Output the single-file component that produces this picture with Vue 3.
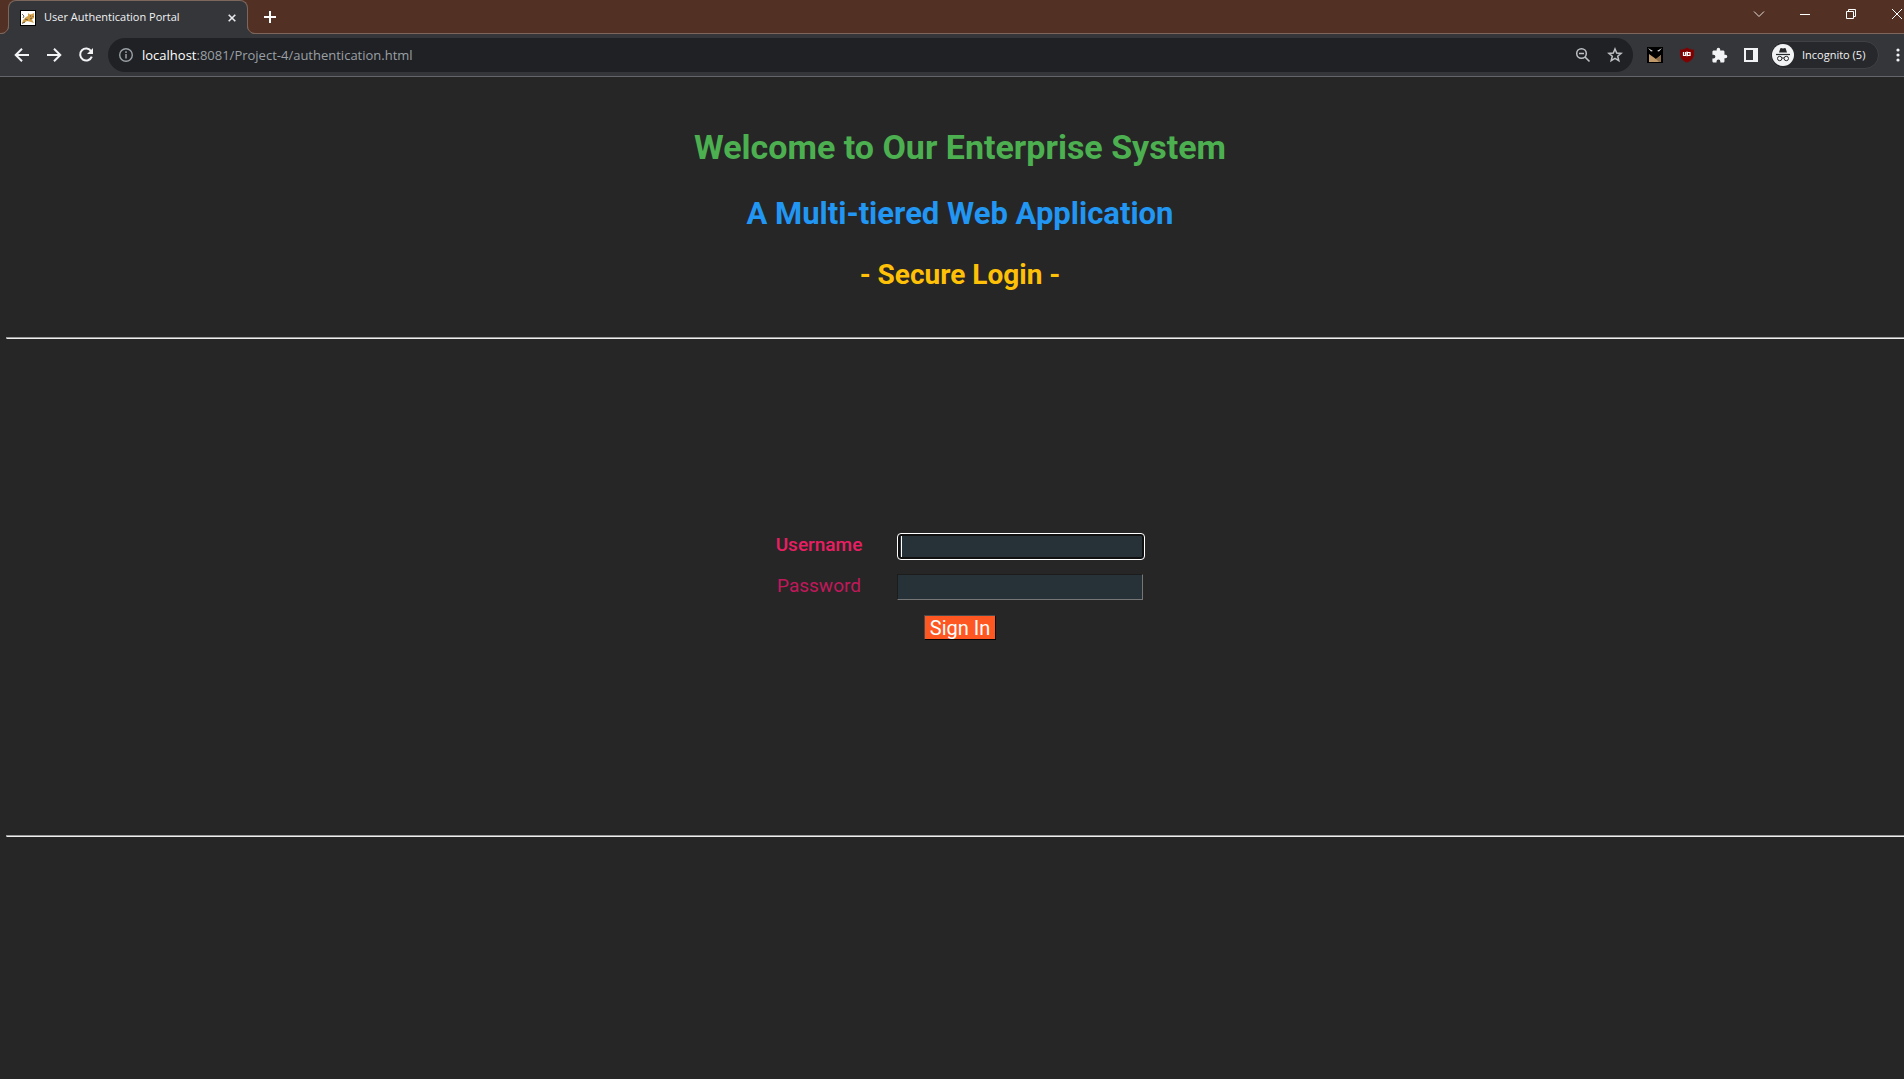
<script setup>
import { ref } from 'vue'

const username = ref('')
const password = ref('')
</script>

<template>
  <div class="screen">
    <div class="window">
      <header class="titlebar">
        <div class="tab">
          <svg class="favicon" width="16" height="16" viewBox="0 0 16 16">
            <rect x="0.5" y="0.5" width="15" height="15" fill="#fff" stroke="#000" />
            <path d="M2 13L3 10L6 7L8 6L8 3L10 4.500L12 4L14 3L14 8L12 9.500L14 13L11 12L7 11L4 13Z" fill="#d2a04a" />
            <path d="M2 4L4 6L3 8M5 9L8 10M2 13.500L5 12M10 6H11M13 6V7M10 9L12 8" fill="none" stroke="#4c4433" stroke-width="0.800" />
          </svg>
          <span class="tab-title">User Authentication Portal</span>
          <button class="tab-close" aria-label="Close tab">
            <svg width="8" height="8" viewBox="0 0 8 8"><path d="M0.7 0.7L7.3 7.3M7.3 0.7L0.7 7.3" stroke="#e8eaed" stroke-width="1.6" /></svg>
          </button>
          <svg class="tab-foot left" width="8" height="8" viewBox="0 0 8 8"><path d="M8 0A8 8 0 0 1 0 8H8Z" fill="#35363a" /><path d="M7.5 0A7.5 7.5 0 0 1 0 7.5" fill="none" stroke="#7d675d" /></svg>
          <svg class="tab-foot right" width="8" height="8" viewBox="0 0 8 8"><path d="M0 0A8 8 0 0 0 8 8H0Z" fill="#35363a" /><path d="M0.5 0A7.5 7.5 0 0 0 8 7.5" fill="none" stroke="#7d675d" /></svg>
        </div>
        <button class="new-tab" aria-label="New tab">
          <svg width="12" height="12" viewBox="0 0 12 12"><path d="M6 0V12M0 6H12" stroke="#fff" stroke-width="2" /></svg>
        </button>
        <div class="controls">
          <button aria-label="Search tabs"><svg width="12" height="12" viewBox="0 0 12 12"><path d="M1 3.5L6 8.5L11 3.5" fill="none" stroke="#e5dfdc" /></svg></button>
          <button aria-label="Minimize"><svg width="10" height="10" viewBox="0 0 10 10"><path d="M0 5.5H10" stroke="#fff" /></svg></button>
          <button aria-label="Restore"><svg width="10" height="10" viewBox="0 0 10 10"><path d="M0.5 2.5H7.5V9.5H0.5ZM2.5 2.5V0.5H9.5V7.5H7.5" fill="none" stroke="#fff" /></svg></button>
          <button aria-label="Close"><svg width="10" height="10" viewBox="0 0 10 10"><path d="M0 0L10 10M10 0L0 10" stroke="#fff" /></svg></button>
        </div>
      </header>

      <nav class="toolbar">
        <button class="tool" aria-label="Back"><svg width="16" height="16" viewBox="0 0 16 16"><path d="M15 8H2M8 1.7L1.7 8L8 14.3" fill="none" stroke="#f1f3f4" stroke-width="2" /></svg></button>
        <button class="tool" aria-label="Forward"><svg width="16" height="16" viewBox="0 0 16 16"><path d="M1 8H14M8 1.7L14.3 8L8 14.3" fill="none" stroke="#f1f3f4" stroke-width="2" /></svg></button>
        <button class="tool" aria-label="Reload"><svg width="16" height="16" viewBox="0 0 16 16"><path d="M13.2 4.2A6 6 0 1 0 13.8 9.6" fill="none" stroke="#f1f3f4" stroke-width="2" /><path d="M15 1V7H9Z" fill="#f1f3f4" /></svg></button>
        <div class="address">
          <svg width="14" height="14" viewBox="0 0 14 14"><circle cx="7" cy="7" r="6.3" fill="none" stroke="#9aa0a6" stroke-width="1.4" /><path d="M7 6V10.5M7 3.3V5" stroke="#9aa0a6" stroke-width="1.5" /></svg>
          <span class="url"><b>localhost</b>:8081/Project-4/authentication.html</span>
          <button class="tool" aria-label="Zoom"><svg width="16" height="16" viewBox="0 0 16 16"><circle cx="6.5" cy="6.5" r="4.8" fill="none" stroke="#bdc1c6" stroke-width="1.5" /><path d="M4 6.5H9M10 10L14.5 14.5" stroke="#bdc1c6" stroke-width="1.6" /></svg></button>
          <button class="tool" aria-label="Bookmark this tab"><svg width="16" height="16" viewBox="0 0 16 16"><path d="M8 2L9.7 6.1L14.1 6.4L10.7 9.3L11.8 13.6L8 11.3L4.2 13.6L5.3 9.3L1.9 6.4L6.3 6.1Z" fill="none" stroke="#bdc1c6" stroke-width="1.5" /></svg></button>
        </div>
        <div class="extensions">
          <button class="tool" aria-label="Dark mode extension"><svg width="16" height="16" viewBox="0 0 16 16"><rect width="16" height="16" fill="#000" /><path d="M2 15V7L9 12L14 8V15Z" fill="#c19a6b" /><path d="M9 12L14 8V15H12Z" fill="#8d6e4a" /><path d="M1 1L6 4L4 4.5ZM15 1L10 4L12 4.5Z" fill="#d8d8d8" /></svg></button>
          <button class="tool" aria-label="uBlock"><svg width="16" height="16" viewBox="0 0 16 16"><path d="M8 0.5C10 2 12 2.500 15 2.500V7C15 11.500 12 14 8 15.500C4 14 1 11.500 1 7V2.500C4 2.500 6 2 8 0.500Z" fill="#800000" stroke="#5d2024" stroke-width="0.5" /><path d="M4.500 5V8.500H6.500V5M8 4.500V9.200M8.500 5.500H11V8.500H8.500Z" fill="none" stroke="#fff" stroke-width="1.200" /></svg></button>
          <button class="tool" aria-label="Extensions"><svg width="17" height="17" viewBox="0 0 24 24"><path d="M20.5 11H19V7c0-1.1-.9-2-2-2h-4V3.500a2.500 2.500 0 0 0-5 0V5H4c-1.100 0-1.990.9-1.990 2v3.800H3.500a2.700 2.700 0 0 1 0 5.400H2V20c0 1.100.9 2 2 2h3.800v-1.500a2.700 2.700 0 0 1 5.400 0V22H17c1.100 0 2-.9 2-2v-4h1.500a2.500 2.500 0 0 0 0-5z" fill="#f1f3f4" /></svg></button>
          <button class="tool" aria-label="Side panel"><svg width="14" height="14" viewBox="0 0 14 14"><path d="M0 0H14V14H0ZM2 2V12H9V2Z" fill="#f1f3f4" fill-rule="evenodd" /></svg></button>
        </div>
        <button class="incognito">
          <svg width="22" height="22" viewBox="0 0 22 22"><circle cx="11" cy="11" r="11" fill="#f1f3f4" /><path d="M7 8.500L8.300 4.500Q8.500 4 9 4.100L11 4.600L13 4.100Q13.500 4 13.700 4.500L15 8.500Z" fill="#27282b" /><path d="M4 10.500H18" stroke="#27282b" stroke-width="1.200" /><circle cx="7.700" cy="14.500" r="2.200" fill="none" stroke="#27282b" /><circle cx="14.300" cy="14.500" r="2.200" fill="none" stroke="#27282b" /><path d="M9.900 14.200Q11 13.500 12.100 14.200" fill="none" stroke="#27282b" /></svg>
          <span>Incognito (5)</span>
        </button>
        <button class="tool" aria-label="Menu"><svg width="4" height="14" viewBox="0 0 4 14"><circle cx="2" cy="2" r="1.600" fill="#f1f3f4" /><circle cx="2" cy="7" r="1.600" fill="#f1f3f4" /><circle cx="2" cy="12" r="1.600" fill="#f1f3f4" /></svg></button>
      </nav>

      <main class="page">
        <h1>Welcome to Our Enterprise System</h1>
        <h2>A Multi-tiered Web Application</h2>
        <h3>- Secure Login -</h3>
        <hr />
        <form class="login" @submit.prevent>
          <label class="user-label" for="username">Username</label>
          <div class="field focused">
            <input id="username" v-model="username" type="text" autocomplete="off" />
            <span class="caret"></span>
          </div>
          <label class="pass-label" for="password">Password</label>
          <div class="field">
            <input id="password" v-model="password" type="password" autocomplete="off" />
          </div>
          <button class="submit" type="submit">Sign In</button>
        </form>
        <hr />
      </main>
    </div>
  </div>
</template>

<style>
body {
  margin: 0;
  background: #262626;
}
</style>

<style scoped>
* {
  box-sizing: border-box;
}

.screen {
  min-height: 100vh;
  overflow: hidden;
  background: #262626;
}

/* A maximised window hangs slightly past the right edge of the screen. */
.window {
  width: calc(100% + 16px);
}

button {
  border: 0;
  padding: 0;
  background: none;
  display: flex;
  align-items: center;
  justify-content: center;
}

svg {
  display: block;
  flex: none;
}

.titlebar {
  height: 34px;
  display: flex;
  background: #523124;
  border-bottom: 1px solid #7d675d;
  font-family: "Open Sans", sans-serif;
}

.tab {
  position: relative;
  width: 240px;
  height: 34px;
  margin-left: 8px;
  padding: 0 11px;
  display: flex;
  align-items: center;
  gap: 8px;
  background: #35363a;
  border: 1px solid #7d675d;
  border-bottom: 0;
  border-radius: 8px 8px 0 0;
}

.tab-title {
  flex: 1;
  padding-bottom: 2px;
  color: #f1f3f4;
  font-size: 11px;
  white-space: nowrap;
}

.tab-close {
  width: 8px;
}

.tab-foot {
  position: absolute;
  bottom: 0;
}

.tab-foot.left {
  left: -8px;
}

.tab-foot.right {
  right: -8px;
}

.new-tab {
  width: 44px;
}

.controls {
  margin-left: auto;
  height: 28px;
  display: flex;
}

.controls button {
  width: 46px;
}

.toolbar {
  height: 43px;
  padding: 0 6px;
  display: flex;
  align-items: center;
  background: #35363a;
  border-bottom: 1px solid #64656a;
}

.tool {
  width: 32px;
  height: 28px;
}

.address {
  flex: 1;
  height: 34px;
  margin: 0 6px;
  padding: 0 2px 0 11px;
  display: flex;
  align-items: center;
  background: #202124;
  border-radius: 17px;
}

.url {
  flex: 1;
  padding-left: 9px;
  color: #9aa0a6;
  font-family: "Open Sans", sans-serif;
  font-size: 13px;
}

.url b {
  color: #fff;
  font-weight: 400;
}

.extensions {
  display: flex;
}

.incognito {
  width: 109px;
  height: 28px;
  margin: 0 3px;
  padding-left: 1px;
  justify-content: flex-start;
  gap: 8px;
  background: #27282b;
  border: 1px solid #404145;
  border-radius: 14px;
  color: #f1f3f4;
  font-family: "Open Sans", sans-serif;
  font-size: 11px;
  white-space: nowrap;
}

.incognito span {
  padding-bottom: 2px;
}

.page {
  padding: 50px 6px 0;
  font-family: Roboto, sans-serif;
  text-align: center;
}

h1 {
  margin: 0 0 29px;
  color: #4caf50;
  font-size: 34px;
  line-height: 40px;
}

h2 {
  margin: 0 0 26px;
  color: #2196f3;
  font-size: 31px;
  line-height: 36px;
}

h3 {
  margin: 0 0 45px;
  color: #ffc107;
  font-size: 28px;
  line-height: 34px;
}

hr {
  height: 2px;
  margin: 0;
  border: 0;
  border-top: 1px solid #9a9a9a;
  border-left: 1px solid #9a9a9a;
  background: #eee;
}

.login {
  width: 372px;
  margin: 194px auto 195px;
  display: grid;
  grid-template-columns: 90px 249px;
  column-gap: 33px;
  row-gap: 14px;
  font-size: 19px;
}

.login label {
  line-height: 24px;
}

.user-label {
  color: #e91e63;
  font-weight: 500;
}

.pass-label {
  color: #c2185b;
  font-weight: 400;
}

.field {
  position: relative;
  height: 27px;
}

.field input {
  display: block;
  width: 246px;
  height: 26px;
  padding: 1px 4px;
  border: 1px solid;
  border-color: #1c1c1c #767676 #767676 #1c1c1c;
  border-radius: 0;
  outline: 0;
  background: #263238;
  color: #fff;
  font: inherit;
}

.focused input {
  width: 248px;
  height: 27px;
  border-color: #fff;
  border-radius: 4px;
  box-shadow: inset 0 0 0 2px #101010;
}

.caret {
  position: absolute;
  left: 4px;
  top: 3px;
  width: 1px;
  height: 21px;
  background: #fff;
}

.submit {
  grid-column: 1 / -1;
  justify-self: center;
  width: 72px;
  height: 25px;
  background: #ff5722;
  border: 1px solid;
  border-color: #4a4a4a #000 #000 #4a4a4a;
  color: #fff;
  font-family: inherit;
  font-size: 20px;
}
</style>
